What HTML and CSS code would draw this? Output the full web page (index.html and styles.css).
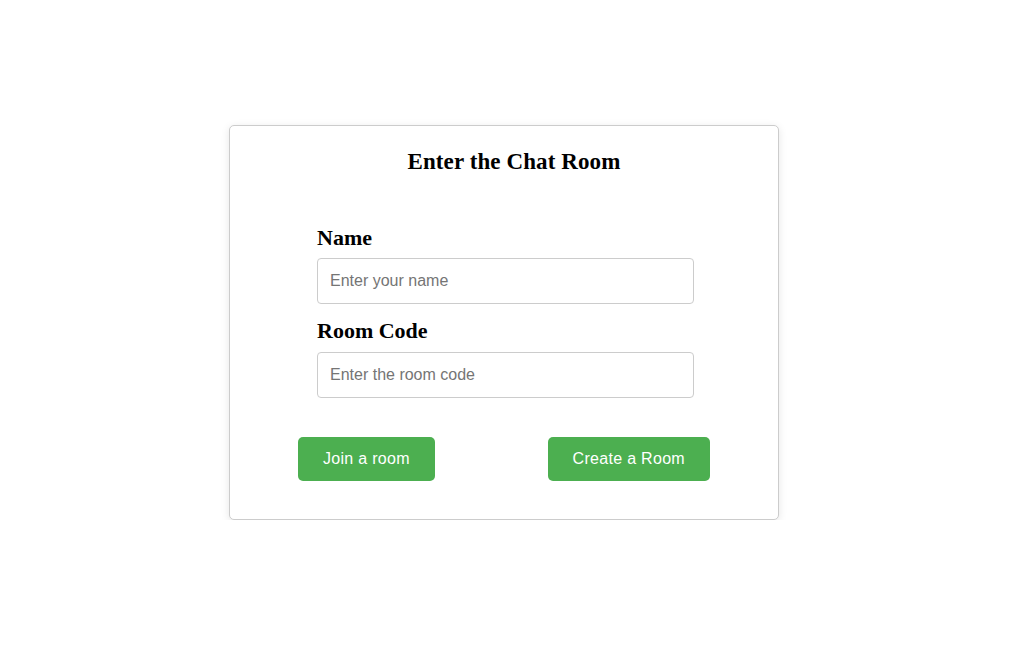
FILE: index.html
```html
<!DOCTYPE html>
<html lang="en">
<head>
<meta charset="utf-8">
<title>Enter the Chat Room</title>
<link rel="stylesheet" href="styles.css">
</head>
<body>
  <div class="card">
    <h2 class="title">Enter the Chat Room</h2>
    <form class="form">
      <label class="label" for="name">Name</label>
      <input class="field" id="name" type="text" placeholder="Enter your name">
      <label class="label label-second" for="code">Room Code</label>
      <input class="field" id="code" type="text" placeholder="Enter the room code">
    </form>
    <div class="actions">
      <button class="btn" type="button">Join a room</button>
      <button class="btn" type="button">Create a Room</button>
    </div>
  </div>
</body>
</html>
```

FILE: styles.css
```css
html, body {
  margin: 0;
  padding: 0;
  background: #ffffff;
  font-family: "Liberation Serif", "Times New Roman", serif;
}

body {
  padding: 125px 0 0 229px;
}

.card {
  box-sizing: border-box;
  width: 550px;
  border: 1px solid #cccccc;
  border-radius: 5px;
  box-shadow: 0 2px 8px rgba(0, 0, 0, 0.1);
  padding: 22px 20px 38px;
  background: #fff;
}

.title {
  margin: 0;
  padding-left: 20px;
  text-align: center;
  font-size: 23px;
  line-height: 28px;
  font-weight: bold;
  letter-spacing: 0.1px;
  color: #000;
}

.form {
  width: 377px;
  margin: 49px 0 0 67px;
  display: flex;
  flex-direction: column;
}

.label {
  font-size: 22px;
  line-height: 26px;
  font-weight: bold;
  color: #000;
  margin-bottom: 7px;
}

.label-second {
  margin-top: 14px;
  margin-bottom: 8px;
}

.field {
  box-sizing: border-box;
  height: 46px;
  width: 100%;
  margin: 0;
  padding: 0 12px;
  border: 1px solid #cccccc;
  border-radius: 4px;
  font-family: "Liberation Sans", Arial, sans-serif;
  font-size: 16px;
  color: #333;
  background: #fff;
}

.field::placeholder {
  color: #757575;
}

.actions {
  display: flex;
  justify-content: space-between;
  padding: 0 48px;
  margin-top: 39px;
}

.btn {
  height: 44px;
  padding: 0 25px;
  border: none;
  border-radius: 5px;
  background: #4caf50;
  color: #fff;
  font-family: "Liberation Sans", Arial, sans-serif;
  font-size: 16px;
  letter-spacing: 0.3px;
  cursor: pointer;
}
```
